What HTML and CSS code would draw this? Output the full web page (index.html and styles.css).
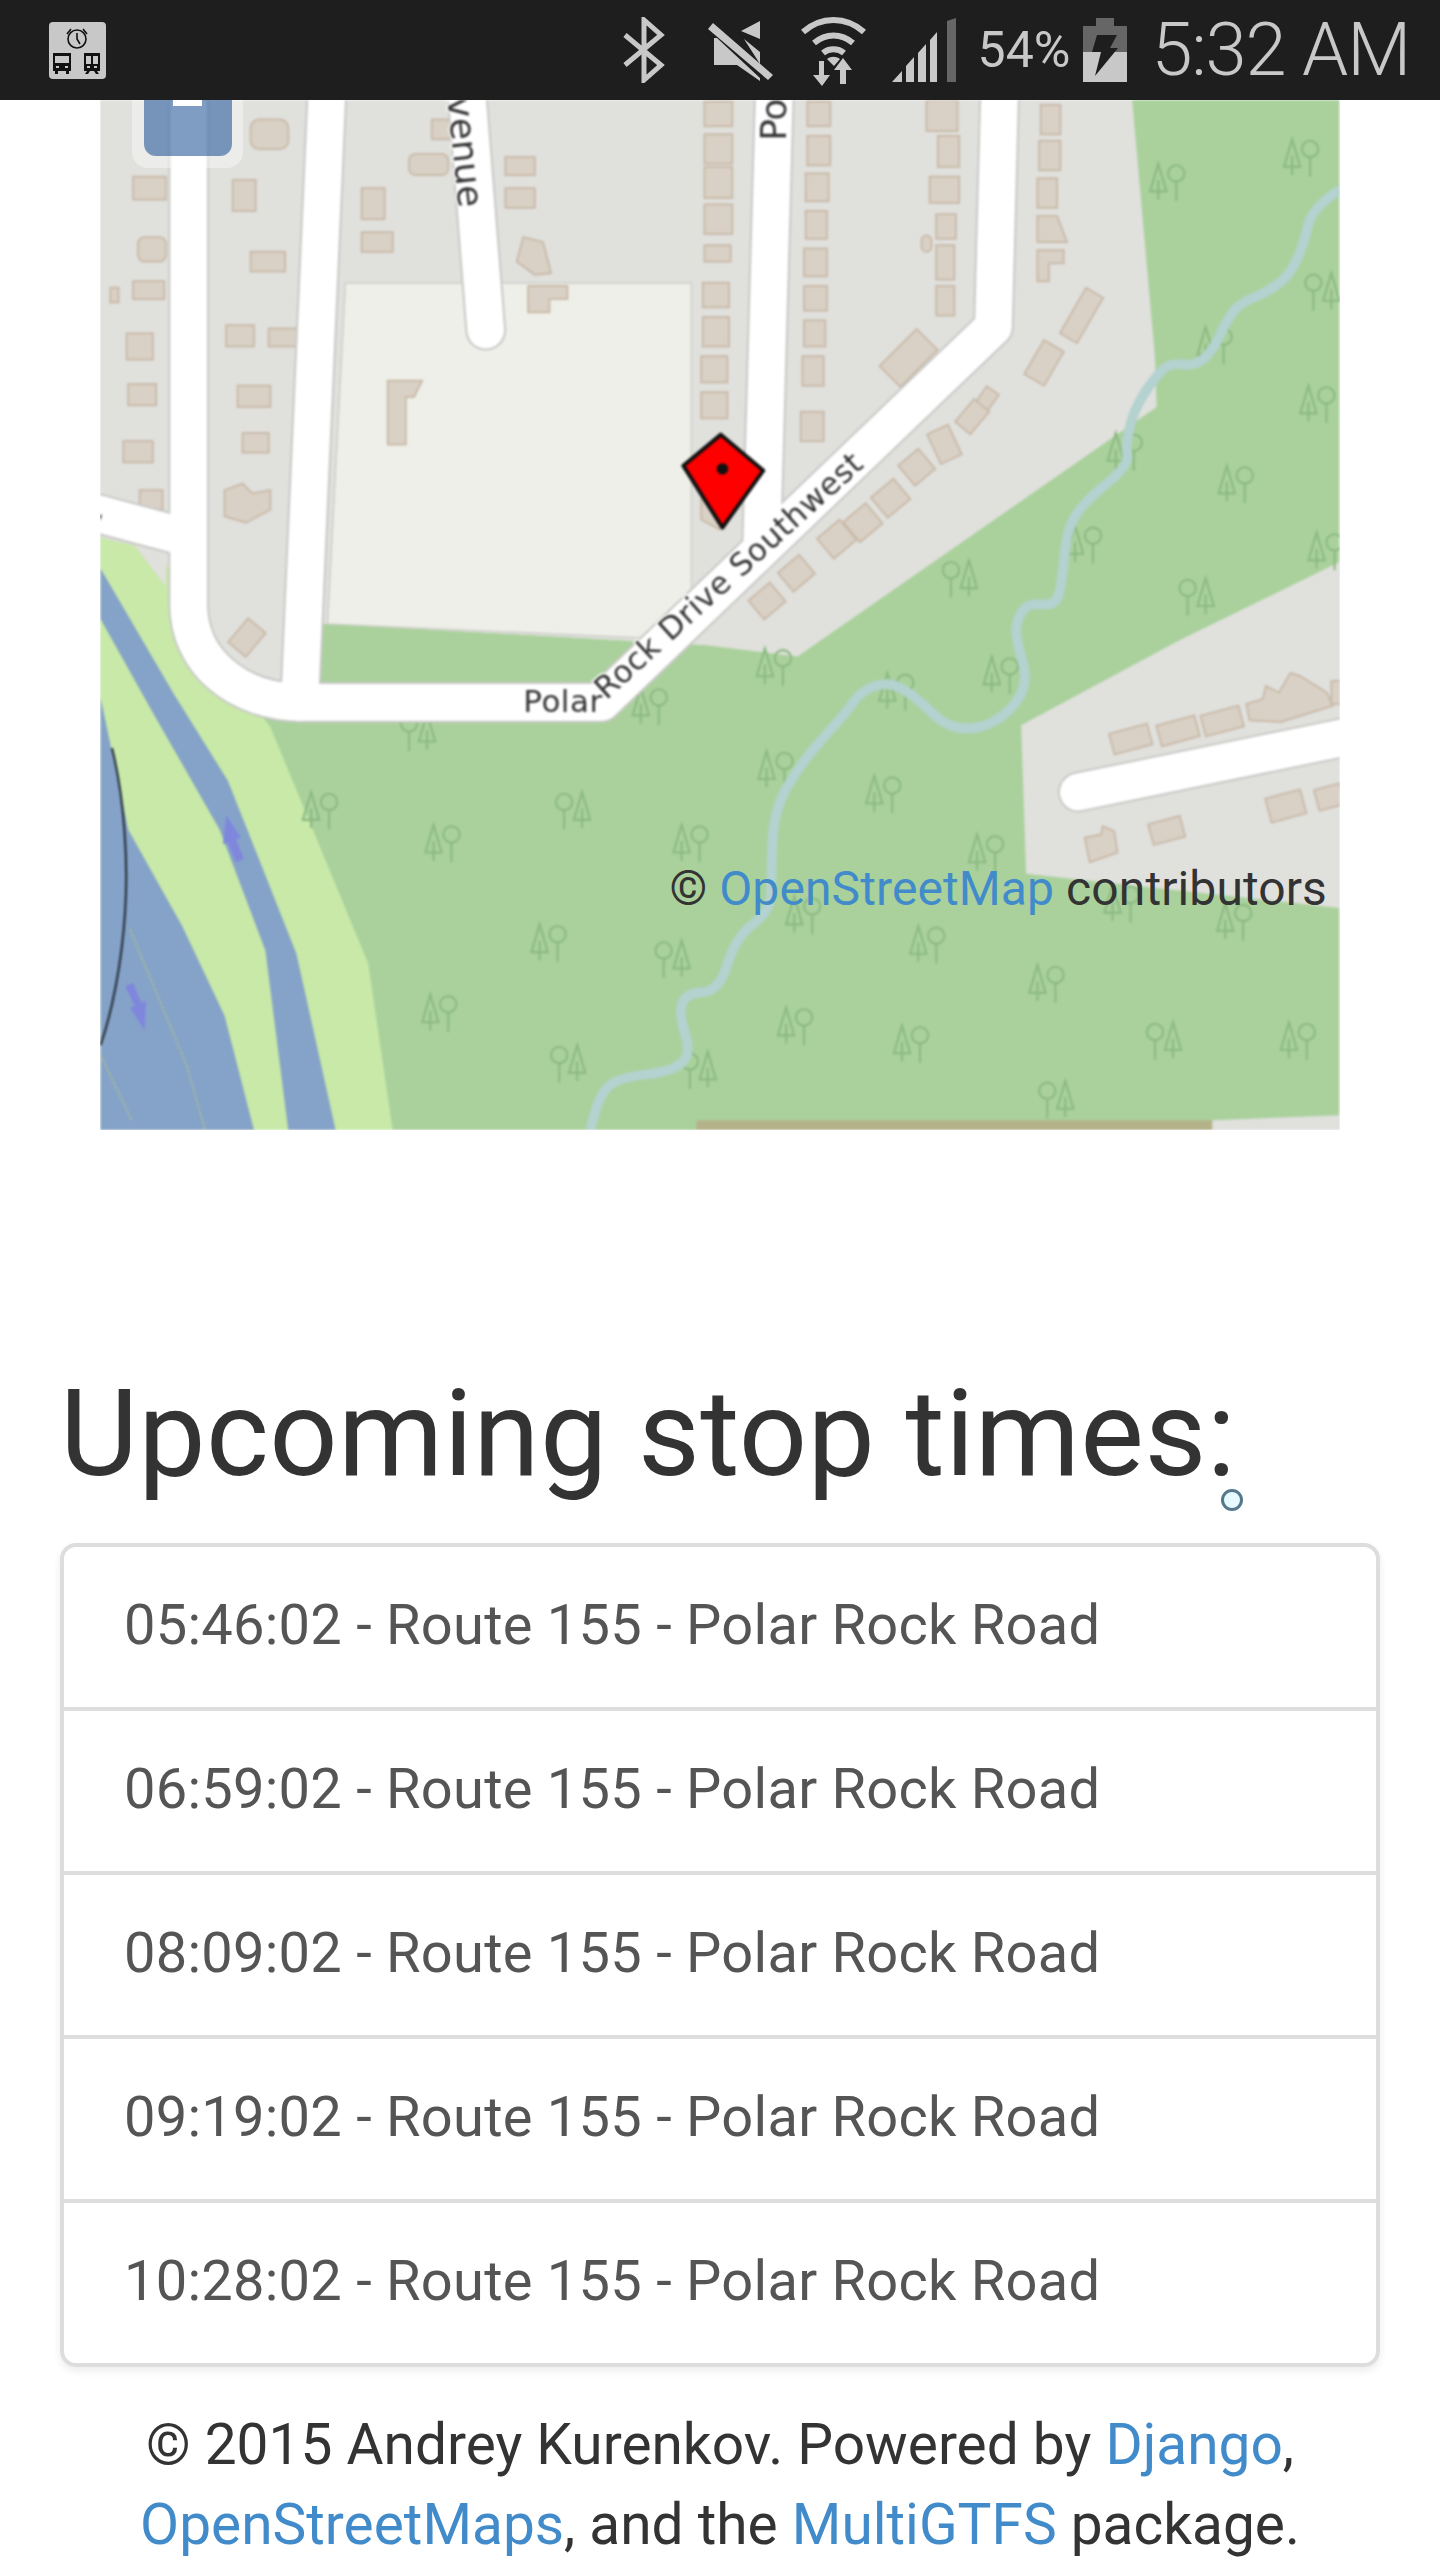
FILE: index.html
```html
<!DOCTYPE html>
<html lang="en">
<head>
    <meta charset="UTF-8">
    <meta name="viewport" content="width=device-width, initial-scale=1.0">
    <title>Stop details</title>
    <link rel="stylesheet" href="styles.css">
</head>
<body>
    <!-- status bar -->
    <div class="statusbar">
        <svg class="notif" viewBox="0 0 57 57">
            <rect width="57" height="57" rx="4" fill="#c8c8c8"/>
            <g fill="none" stroke="#111" stroke-width="1.6">
                <circle cx="28" cy="17" r="9"/>
                <path d="M28 11v6l3 5M18 12l4-5M38 12l-4-5"/>
            </g>
            <path fill="#111" d="M4 31h18v18h-2v3h-3v-3H9v3H6v-3H4zM6 34v7h14v-7zM7 44v2h3v-2zM16 44v2h3v-2z" fill-rule="evenodd"/>
            <path fill="#111" d="M35 31h16v18h-3l2 3h-3l-2-3h-4l-2 3h-3l2-3h-3zM37 34v8h5v-8zM44 34v8h5v-8zM38 44v2h3v-2zM45 44v2h3v-2z" fill-rule="evenodd"/>
        </svg>
        <div class="status-right">
            <svg class="ico ico-bt" viewBox="0 0 45 66">
                <path fill="none" stroke="#c8c8c8" stroke-width="5" d="M3 18l36 30-17 15V3l17 15-36 30"/>
            </svg>
            <svg class="ico ico-mute" viewBox="0 0 65 62">
                <path fill="#c8c8c8" d="M52 2v18L33 12zM6 19h3l43 40v3L29 46H6zM52 33v12L36 20z"/>
                <path fill="#c8c8c8" d="M0 10l5-6 60 52-5 5z"/>
            </svg>
            <svg class="ico ico-wifi" viewBox="0 0 67 71">
                <g fill="none" stroke="#c8c8c8" stroke-width="6">
                    <path d="M3 17c18-16 43-16 61 0"/>
                    <path d="M14 28c12-10 27-10 39 0"/>
                    <path d="M23 38c6-5 15-5 21 0"/>
                </g>
                <path fill="#c8c8c8" d="M27 44c4-3 9-3 13 0l-6 7zM19 46h5v14h6l-8 11-9-11h6zM43 43l9 12h-6v14h-6V55h-6z"/>
            </svg>
            <svg class="ico ico-signal" viewBox="0 0 64 64">
                <path fill="#c8c8c8" d="M0 64l10-11v11zM14 64V48l8-9v25zM26 64V35l8-9v38zM38 64V22l7-8v50z"/>
                <path fill="#666" d="M55 64V3l9-3v64z"/>
            </svg>
            <span class="pct">54%</span>
            <svg class="ico ico-batt" viewBox="0 0 44 64">
                <path fill="#666" d="M13 0h18v8h13v30H0V8h13z"/>
                <path fill="#c8c8c8" d="M0 34h44v30H0z"/>
                <path fill="#1e1e1e" d="M14 17h20l-7 13h8L12 58l6-24H9z"/>
            </svg>
            <span class="clock">5:32 AM</span>
        </div>
    </div>

    <div class="map">
        <svg class="tiles" viewBox="61 61 759 631">
            <defs>
                <g id="tree" fill="none" stroke="#8cb982" stroke-width="1.3">
                    <path d="M-6 11V-1M-11 6L-6-11-1 6z"/>
                    <circle cx="5" cy="-5" r="5"/>
                    <path d="M5 0V12"/>
                </g>
                <g id="tree-r" fill="none" stroke="#8cb982" stroke-width="1.3">
                    <path d="M6 11V-1M1 6L6-11 11 6z"/>
                    <circle cx="-5" cy="-5" r="5"/>
                    <path d="M-5 0V12"/>
                </g>
            </defs>
            <rect x="61" y="61" width="759" height="631" fill="#aad19c"/>
            <!-- land use -->
            <path fill="#e0e0dd" d="M61 61H693L707 219 708 249 488 402 432 395 200 382 190 420 120 420 101 360 61 330z"/>
            <path fill="#e0e0dd" d="M625 444L722 392 820 344V556L628 535z"/>
            <path fill="#e0e0dd" d="M742 686L820 683V692H742z"/>
            <path fill="#b4b289" d="M426 686H742V692H426z"/>
            <path fill="#eeefe8" stroke="#d0d0cc" d="M211 173H423V392L200 382z"/>
            <path fill="#aad19c" d="M197 382L395 393 355 418H195z"/>
            <!-- river banks -->
            <path fill="#c8e9a8" d="M61 329L82 334 101 345 130 400 165 445 225 590 240 692H61z"/>
            <path fill="#85a3c8" d="M61 348L106 425 139 478 181 584 205 692H176L162 582 134 508 94 438 61 379z"/>
            <path fill="#85a3c8" d="M61 427L78 508 111 567 137 622 155 692H61z"/>
            <path fill="#e0e0dd" d="M82 334L101 336V359z"/>
            <path fill="none" stroke="#2b3440" stroke-width="1.4" d="M68 458C76 490 78 530 76 559 74 590 68 620 61 640"/>
            <path fill="none" stroke="#a8bb9a" stroke-width="1" stroke-dasharray="2 1" d="M79 569L114 653 125 692M61 646L80 686"/>
            <path fill="#7f87dd" d="M138 499L147 513 144 514 149 526 144 528 139 516 136 517z"/>
            <path fill="#7f87dd" d="M88 631L79 617 82 616 76 604 81 602 86 614 89 613z"/>
            <!-- trees -->
            <use href="#tree" x="797" y="96"/><use href="#tree" x="715" y="111"/><use href="#tree-r" x="809" y="178"/>
            <use href="#tree" x="744" y="211"/><use href="#tree" x="807" y="247"/><use href="#tree" x="689" y="276"/>
            <use href="#tree" x="757" y="296"/><use href="#tree" x="664" y="333"/><use href="#tree" x="812" y="337"/>
            <use href="#tree-r" x="587" y="354"/><use href="#tree-r" x="732" y="365"/><use href="#tree" x="474" y="408"/>
            <use href="#tree" x="549" y="423"/><use href="#tree" x="613" y="413"/><use href="#tree" x="475" y="471"/>
            <use href="#tree" x="541" y="486"/><use href="#tree" x="604" y="522"/><use href="#tree" x="423" y="516"/>
            <use href="#tree" x="492" y="560"/><use href="#tree" x="687" y="553"/><use href="#tree" x="756" y="564"/>
            <use href="#tree" x="568" y="578"/><use href="#tree" x="641" y="602"/><use href="#tree" x="487" y="628"/>
            <use href="#tree" x="558" y="639"/><use href="#tree-r" x="712" y="637"/><use href="#tree" x="795" y="637"/>
            <use href="#tree-r" x="646" y="673"/><use href="#tree-r" x="255" y="448"/><use href="#tree" x="398" y="432"/>
            <use href="#tree" x="196" y="496"/><use href="#tree" x="271" y="516"/><use href="#tree-r" x="350" y="496"/>
            <use href="#tree" x="336" y="577"/><use href="#tree-r" x="411" y="587"/>
            <use href="#tree" x="269" y="620"/><use href="#tree-r" x="347" y="651"/><use href="#tree-r" x="427" y="655"/>
            <!-- stream -->
            <path fill="none" stroke="#b3d2d0" stroke-width="6" stroke-linejoin="round" d="M820 116Q803 127 800.5 138.5Q798 150 793.5 159.5Q789 169 782 174Q775 179 766.5 182.5Q758 186 754 192Q750 198 745.5 207.5Q741 217 735.5 220.5Q730 224 723 223Q716 222 711 227Q706 232 700 241.5Q694 251 691.5 261.5Q689 272 690 278.5Q691 285 678 295.5Q665 306 659 314.5Q653 323 651.5 340Q650 357 648 364Q646 371 637.5 370Q629 369 625.5 374.5Q622 380 622 386Q622 392 625.5 403.5Q629 415 625.5 423.5Q622 432 612.5 439Q603 446 591.5 446Q580 446 570.5 436.5Q561 427 552.5 422Q544 417 535.5 420Q527 423 522.5 429.5Q518 436 504 451.5Q490 467 481.5 482Q473 497 472.5 518Q472 539 471.5 548.5Q471 558 460.5 566Q450 574 445 590.5Q440 607 430 607.5Q420 608 417.5 614Q415 620 419 632.5Q423 645 417.5 650.5Q412 656 395 658Q378 660 372.5 665Q367 670 364 681L361 692"/>
            <!-- buildings -->
            <g fill="#dad1c6" stroke="#c9bba9" stroke-width="1.2">
                <rect x="81" y="108" width="20" height="14"/><rect x="142" y="110" width="14" height="19"/>
                <rect x="153" y="73" width="23" height="18" rx="5"/><rect x="84" y="145" width="17" height="15" rx="4"/>
                <rect x="153" y="154" width="21" height="12"/><rect x="81" y="172" width="19" height="11"/>
                <rect x="67" y="176" width="5" height="9"/><rect x="77" y="204" width="16" height="16"/>
                <rect x="138" y="199" width="17" height="13"/><rect x="164" y="201" width="19" height="11"/>
                <rect x="221" y="115" width="14" height="19"/><rect x="221" y="142" width="19" height="12"/>
                <rect x="250" y="94" width="24" height="13" rx="4"/><rect x="264" y="73" width="11" height="12"/>
                <rect x="309" y="96" width="18" height="11"/><rect x="309" y="115" width="18" height="12"/>
                <path d="M320 145L332 148 337 167 327 168 316 160z"/><path d="M323 175H347V183H336V191H323z"/>
                <path d="M237 233H258L253 243H248V272H237z"/><rect x="145" y="236" width="20" height="13"/>
                <rect x="78" y="235" width="17" height="13"/><rect x="75" y="270" width="18" height="13"/>
                <rect x="85" y="300" width="14" height="12"/><path d="M137 300L148 296 154 302 165 300V312L150 320 137 316z"/>
                <rect x="148" y="265" width="16" height="12"/><rect x="144" y="381" width="14" height="19" transform="rotate(40 151 390)"/>
                <!-- column by the Pol... road -->
                <rect x="431" y="62" width="17" height="15"/><rect x="431" y="82" width="17" height="18"/>
                <rect x="431" y="102" width="17" height="19"/><rect x="431" y="125" width="17" height="18"/>
                <rect x="431" y="150" width="16" height="10"/><rect x="430" y="173" width="16" height="15"/>
                <rect x="430" y="194" width="16" height="18"/><rect x="429" y="218" width="16" height="16"/>
                <rect x="429" y="240" width="16" height="16"/><path d="M429 300L440 295 447 310 440 324 429 318z"/>
                <rect x="494" y="62" width="14" height="15"/><rect x="494" y="83" width="14" height="18"/>
                <rect x="493" y="106" width="14" height="17"/><rect x="493" y="129" width="13" height="17"/>
                <rect x="492" y="152" width="14" height="17"/><rect x="492" y="175" width="14" height="15"/>
                <rect x="492" y="196" width="13" height="16"/><rect x="491" y="218" width="13" height="18"/>
                <rect x="490" y="252" width="14" height="18"/>
                <rect x="567" y="61" width="19" height="19"/><rect x="574" y="83" width="13" height="19"/>
                <rect x="569" y="108" width="18" height="16"/><rect x="573" y="131" width="12" height="15"/>
                <rect x="573" y="150" width="11" height="21"/><rect x="573" y="175" width="11" height="18"/>
                <rect x="564" y="144" width="6" height="10" rx="3"/>
                <rect x="637" y="64" width="12" height="18"/><rect x="636" y="86" width="13" height="18"/>
                <rect x="635" y="109" width="12" height="18"/><path d="M635 132H647L653 148H635z"/>
                <path d="M635 153H651V161H642V172H635z"/>
                <rect x="656" y="177" width="12" height="32" transform="rotate(30 662 193)"/>
                <rect x="632" y="210" width="14" height="24" transform="rotate(30 639 222)"/>
                <rect x="540" y="210" width="32" height="18" transform="rotate(-45 556 219)"/>
                <!-- along the diagonal -->
                <rect x="599" y="238" width="9" height="14" transform="rotate(35 604 245)"/>
                <rect x="589" y="246" width="12" height="18" transform="rotate(40 595 255)"/>
                <rect x="571" y="262" width="14" height="20" transform="rotate(-25 578 272)"/>
                <rect x="553" y="278" width="16" height="16" transform="rotate(-40 561 286)"/>
                <rect x="536" y="297" width="18" height="16" transform="rotate(-40 545 305)"/>
                <rect x="519" y="312" width="18" height="16" transform="rotate(-40 528 320)"/>
                <rect x="503" y="322" width="18" height="16" transform="rotate(-40 512 330)"/>
                <rect x="479" y="343" width="17" height="15" transform="rotate(-40 488 351)"/>
                <rect x="461" y="360" width="17" height="15" transform="rotate(-40 470 368)"/>
                <!-- bottom right block -->
                <rect x="680" y="446" width="24" height="13" transform="rotate(-15 692 452)"/>
                <rect x="709" y="441" width="24" height="13" transform="rotate(-15 721 447)"/>
                <rect x="736" y="435" width="24" height="13" transform="rotate(-15 748 441)"/>
                <path d="M763 431L773 428 775 420 783 424 790 412 796 414 812 424 816 432 784 442 765 441z"/>
                <rect x="815" y="417" width="8" height="14"/>
                <rect x="776" y="486" width="22" height="15" transform="rotate(-15 787 493)"/>
                <rect x="806" y="482" width="16" height="13" transform="rotate(-15 812 489)"/>
                <path d="M664 513L674 511 675 506 682 509 684 522 667 528z"/>
                <rect x="704" y="502" width="20" height="13" transform="rotate(-15 714 508)"/>
            </g>
            <!-- roads -->
            <g fill="none" stroke="#c9c9c7" stroke-width="25" stroke-linejoin="round" stroke-linecap="round">
                <path d="M115 50V370C115 405 145 430 185 430H368L608 200 612 50"/>
                <path d="M200 50L183 430"/>
                <path d="M285 50L297 202"/>
                <path d="M474 50L466 335"/>
                <path d="M50 312L110 328"/>
                <path d="M830 450L660 485"/>
            </g>
            <g fill="none" stroke="#fff" stroke-width="22.5" stroke-linejoin="round" stroke-linecap="round">
                <path d="M115 50V370C115 405 145 430 185 430H368L608 200 612 50"/>
                <path d="M200 50L183 430"/>
                <path d="M285 50L297 202"/>
                <path d="M474 50L466 335"/>
                <path d="M50 312L110 328"/>
                <path d="M830 450L660 485"/>
            </g>
            <!-- road names -->
            <path id="polar" fill="none" d="M320 436H367L374 426 545 271"/>
            <text class="road-name road-polar"><textPath href="#polar">Polar Rock Drive Southwest</textPath></text>
            <text class="road-name road-big" transform="translate(272 46) rotate(84)">Avenue</text>
            <text class="road-name road-big" transform="translate(481 86) rotate(-90)">Pol</text>
            <text class="road-name" transform="translate(60 322) rotate(-75)">t</text>
            <!-- marker -->
            <path fill="#f00" stroke="#111" stroke-width="2.4" stroke-linejoin="round" d="M441 266L467 288 442 323 418 285z"/>
            <circle cx="442" cy="287" r="3.5" fill="#111"/>
        </svg>
        <div class="zoom-box"><div class="zoom-btn"><span class="zoom-minus"></span></div></div>
        <div class="attribution">&copy; <a href="#">OpenStreetMap</a> contributors</div>
    </div>

    <div class="container">
        <h2>Upcoming stop times:<span class="touch-dot"></span></h2>
        <ul class="list-group">
            <li class="list-group-item">05:46:02 - Route 155 - Polar Rock Road</li>
            <li class="list-group-item">06:59:02 - Route 155 - Polar Rock Road</li>
            <li class="list-group-item">08:09:02 - Route 155 - Polar Rock Road</li>
            <li class="list-group-item">09:19:02 - Route 155 - Polar Rock Road</li>
            <li class="list-group-item">10:28:02 - Route 155 - Polar Rock Road</li>
        </ul>
        <p class="footer">&copy; 2015 Andrey Kurenkov. Powered by <a href="#">Django</a>, <a href="#">OpenStreetMaps</a>, and the <a href="#">MultiGTFS</a> package.</p>
    </div>
</body>
</html>
```

FILE: styles.css
```css
html, body {
    height: 2560px;
    overflow: hidden;
}
body {
    margin: 0;
    background: #fff;
    color: #333;
    font-family: Roboto, "Liberation Sans", sans-serif;
    font-size: 56px;
    line-height: 80px;
}
a {
    color: #428bca;
    text-decoration: none;
}

/* status bar */
.statusbar {
    height: 100px;
    background: #1e1e1e;
    display: flex;
    align-items: center;
    justify-content: space-between;
    padding: 0 30px 0 49px;
    position: relative;
    z-index: 2;
}
.notif {
    width: 57px;
    height: 57px;
}
.status-right {
    display: flex;
    align-items: center;
    color: #c8c8c8;
}
.ico {
    display: block;
}
.ico-bt { width: 45px; height: 66px; }
.ico-mute { width: 65px; height: 62px; margin-left: 41px; }
.ico-wifi { width: 67px; height: 71px; margin-left: 27px; }
.ico-signal { width: 64px; height: 64px; margin-left: 25px; }
.pct {
    font-size: 50px;
    line-height: 100px;
    margin-left: 22px;
}
.ico-batt { width: 44px; height: 64px; margin-left: 13px; }
.clock {
    font-size: 74px;
    font-weight: 300;
    letter-spacing: -1.2px;
    line-height: 100px;
    margin-left: 24px;
}

/* map */
.map {
    position: relative;
    height: 1030px;
    margin: 0 100px;
    overflow: hidden;
}
.tiles {
    display: block;
    width: 1240px;
    height: 1030px;
    filter: blur(.8px);
}
.road-name {
    font-family: "DejaVu Sans", sans-serif;
    font-size: 19px;
    fill: #333;
    stroke: #fff;
    stroke-width: 2px;
    paint-order: stroke;
}
.road-polar {
    letter-spacing: .3px;
}
.road-big {
    font-size: 22px;
}
.zoom-box {
    position: absolute;
    left: 32px;
    top: -20px;
    width: 111px;
    height: 88px;
    background: rgba(255,255,255,.4);
    border-radius: 0 0 16px 16px;
}
.zoom-btn {
    position: absolute;
    left: 12px;
    right: 11px;
    top: 0;
    bottom: 12px;
    background: rgba(0,60,136,.5);
    border-radius: 0 0 12px 12px;
}
.zoom-minus {
    position: absolute;
    left: 29px;
    top: 0;
    width: 29px;
    height: 26px;
    background: #fff;
}
.attribution {
    position: absolute;
    right: 13px;
    top: 749px;
    font-size: 48px;
    letter-spacing: .1px;
    line-height: 80px;
}

/* content */
.container {
    padding: 238px 60px 0;
}
h2 {
    position: relative;
    margin: 0 0 43px;
    font-size: 120px;
    font-weight: 400;
    letter-spacing: .4px;
    line-height: 132px;
}
.touch-dot {
    position: absolute;
    left: 1161px;
    top: 121px;
    box-sizing: border-box;
    width: 22px;
    height: 22px;
    background: #e6f9fd;
    border: 3px solid #54788a;
    border-radius: 50%;
}
.list-group {
    list-style: none;
    margin: 0 0 38px;
    padding: 0;
    border-radius: 16px;
    box-shadow: 0 4px 8px rgba(0,0,0,.075);
}
.list-group-item {
    padding: 38px 60px 42px;
    color: #555;
    background: #fff;
    border: 4px solid #ddd;
    letter-spacing: .26px;
    margin-bottom: -4px;
}
.list-group-item:first-child {
    border-radius: 16px 16px 0 0;
}
.list-group-item:last-child {
    border-radius: 0 0 16px 16px;
    margin-bottom: 0;
}
.footer {
    margin: 0;
    font-size: 56.8px;
    text-align: center;
}
```
